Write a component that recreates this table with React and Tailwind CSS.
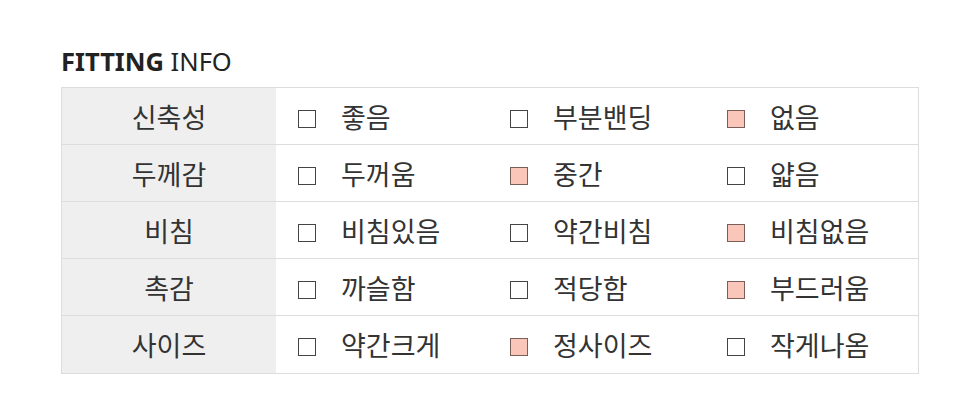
const rows = [
  { label: "신축성", options: ["좋음", "부분밴딩", "없음"], checked: 2 },
  { label: "두께감", options: ["두꺼움", "중간", "얇음"], checked: 1 },
  { label: "비침", options: ["비침있음", "약간비침", "비침없음"], checked: 2 },
  { label: "촉감", options: ["까슬함", "적당함", "부드러움"], checked: 2 },
  { label: "사이즈", options: ["약간크게", "정사이즈", "작게나옴"], checked: 1 },
];

const widths = ["w-[212px]", "w-[217px]", "flex-1"];
const ko = { fontFamily: '"Noto Sans CJK KR", sans-serif' };

function Box({ on }) {
  return (
    <span
      className={`inline-block w-[18px] h-[18px] mt-[5px] border ${
        on ? "bg-[#f9c6b9] border-[#7a5f58]" : "bg-white border-[#444]"
      }`}
    />
  );
}

export default function App() {
  return (
    <div
      className="w-[980px] h-[411px] bg-white pt-[43px] pl-[61px] text-[#333]"
      style={{ fontFamily: '"Noto Sans", "Noto Sans CJK KR", sans-serif' }}
    >
      <h2 className="text-[25.5px] leading-[36px] text-[#222] mb-[8px]">
        <span className="font-bold">FITTING</span> INFO
      </h2>
      <div className="w-[858px] border border-[#dddddd]">
        {rows.map((row, i) => (
          <div
            key={row.label}
            className={`flex ${i < rows.length - 1 ? "h-[57px] border-b border-[#dddddd]" : "h-[57px]"}`}
          >
            <div
              className="w-[214px] bg-[#efefef] flex items-center justify-center text-[27px] leading-none"
              style={ko}
            >
              {row.label}
            </div>
            <div className="flex-1 flex items-center pl-[22px]">
              {row.options.map((opt, j) => (
                <div key={opt} className={`${widths[j]} flex items-center`}>
                  <Box on={j === row.checked} />
                  <span className="ml-[25px] text-[27px] leading-none" style={ko}>
                    {opt}
                  </span>
                </div>
              ))}
            </div>
          </div>
        ))}
      </div>
    </div>
  );
}
